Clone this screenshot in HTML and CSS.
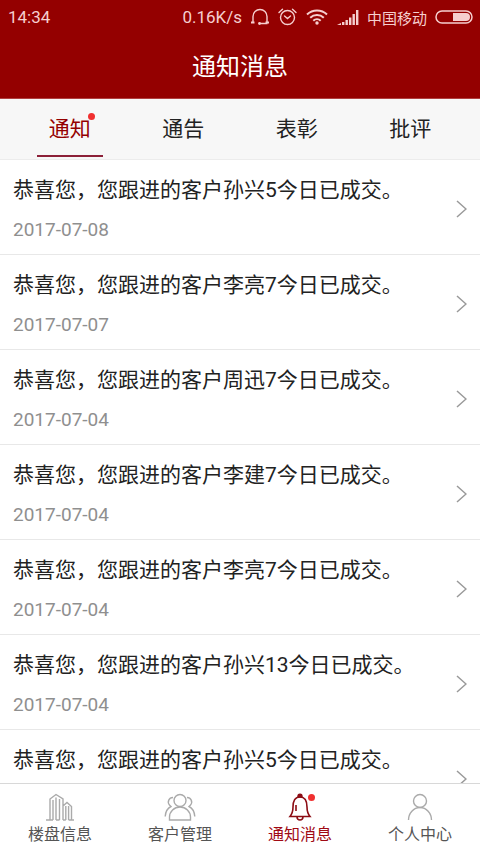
FILE: index.html
```html
<!DOCTYPE html>
<html lang="zh-CN">
<head>
<meta charset="utf-8">
<meta name="viewport" content="width=device-width, initial-scale=1">
<title>通知消息</title>
<link rel="stylesheet" href="styles.css">
</head>
<body>
<header class="header">
  <div class="status">
    <span class="clock">14:34</span>
    <span class="speed">0.16K/s</span>
    <svg class="status-icon" width="20" height="18" viewBox="0 0 20 18" fill="none" stroke="currentColor" stroke-width="1.4"><path d="M3 14V8.500a7 7 0 0 1 14 0V14M17.500 15.500h-8"/><path d="M1 13.500h3.500v2H1zM15.500 13.500H19v2h-3.500z" fill="currentColor" stroke="none"/><circle cx="9.500" cy="15.500" r="1.400" fill="currentColor" stroke="none"/></svg>
    <svg class="status-icon" width="19" height="18" viewBox="0 0 19 18" fill="none" stroke="currentColor" stroke-width="1.400" stroke-linecap="round"><circle cx="9.500" cy="9.500" r="7"/><path d="M6.500 8l3 2.500 3-2.500M1 4.500L4.500 1.200M18 4.500L14.500 1.200"/></svg>
    <svg class="status-icon wifi" width="22" height="16" viewBox="0 0 22 16" fill="none" stroke="currentColor" stroke-width="2"><path d="M1 5.500a14.500 14.500 0 0 1 20 0M4.200 8.800a9.800 9.800 0 0 1 13.600 0M7.300 11.800a5.300 5.300 0 0 1 7.400 0"/><circle cx="11" cy="14" r="1.700" fill="currentColor" stroke="none"/></svg>
    <svg class="status-icon signal" width="22" height="15" viewBox="0 0 22 15" fill="currentColor"><path d="M0 15l4-2v2zM5 12h2.400v3H5zM8.500 10h2.400v5H8.500zM12 7.500h2.400V15H12zM15.500 4h2.400v11h-2.400zM19 0h2.400v15H19z"/></svg>
    <span class="carrier">中国移动</span>
    <svg class="battery" width="38" height="14" viewBox="0 0 38 14"><rect x="1" y="1" width="36" height="12" rx="6" fill="none" stroke="currentColor" stroke-width="1.500"/><path d="M18 3h13a4 4 0 0 1 0 8H18z" fill="currentColor"/></svg>
  </div>
  <h1 class="title">通知消息</h1>
</header>
<nav class="tabs" aria-label="消息分类">
  <a class="tab tab-on" href="#notice"><span class="tab-text">通知<i class="dot"></i></span></a>
  <a class="tab" href="#bulletin"><span class="tab-text">通告</span></a>
  <a class="tab" href="#praise"><span class="tab-text">表彰</span></a>
  <a class="tab" href="#criticism"><span class="tab-text">批评</span></a>
</nav>
<main class="list">
  <a class="row" href="#m1"><div class="msg"><p class="text">恭喜您，您跟进的客户孙兴5今日已成交。</p><time class="date">2017-07-08</time></div><svg class="chevron" width="11" height="18" viewBox="0 0 11 18"><path d="M1 1l9 8-9 8"/></svg></a>
  <a class="row" href="#m2"><div class="msg"><p class="text">恭喜您，您跟进的客户李亮7今日已成交。</p><time class="date">2017-07-07</time></div><svg class="chevron" width="11" height="18" viewBox="0 0 11 18"><path d="M1 1l9 8-9 8"/></svg></a>
  <a class="row" href="#m3"><div class="msg"><p class="text">恭喜您，您跟进的客户周迅7今日已成交。</p><time class="date">2017-07-04</time></div><svg class="chevron" width="11" height="18" viewBox="0 0 11 18"><path d="M1 1l9 8-9 8"/></svg></a>
  <a class="row" href="#m4"><div class="msg"><p class="text">恭喜您，您跟进的客户李建7今日已成交。</p><time class="date">2017-07-04</time></div><svg class="chevron" width="11" height="18" viewBox="0 0 11 18"><path d="M1 1l9 8-9 8"/></svg></a>
  <a class="row" href="#m5"><div class="msg"><p class="text">恭喜您，您跟进的客户李亮7今日已成交。</p><time class="date">2017-07-04</time></div><svg class="chevron" width="11" height="18" viewBox="0 0 11 18"><path d="M1 1l9 8-9 8"/></svg></a>
  <a class="row" href="#m6"><div class="msg"><p class="text">恭喜您，您跟进的客户孙兴13今日已成交。</p><time class="date">2017-07-04</time></div><svg class="chevron" width="11" height="18" viewBox="0 0 11 18"><path d="M1 1l9 8-9 8"/></svg></a>
  <a class="row" href="#m7"><div class="msg"><p class="text">恭喜您，您跟进的客户孙兴5今日已成交。</p></div><svg class="chevron" width="11" height="18" viewBox="0 0 11 18"><path d="M1 1l9 8-9 8"/></svg></a>
</main>
<nav class="bottom" aria-label="主导航">
  <a class="item" href="#estate">
    <svg class="item-icon" width="30" height="28" viewBox="0 0 30 28"><path d="M1 27h4V6l6-4.500L18 6v21M8 27V7M11 27V4.500M14.500 27V6M5 27h3M11 27h3.500M18 13l4-3.500 4.500 4V27H29M20.800 27V13M23.600 27V13M18 27h2.800M23.600 27h3"/></svg>
    <span>楼盘信息</span>
  </a>
  <a class="item" href="#clients">
    <svg class="item-icon" width="32" height="28" viewBox="0 0 32 28"><circle cx="16" cy="7.500" r="6"/><path d="M5.500 27v-3a10.500 10 0 0 1 21 0v3zM9 4.500a4.500 4.500 0 0 0-3.500 7.500l1.500 1.500C3 15.500 1.500 19 1.200 23.500M23 4.500a4.500 4.500 0 0 1 3.500 7.500L25 13.500c4 2 5.500 5.500 5.800 10"/></svg>
    <span>客户管理</span>
  </a>
  <a class="item item-on" href="#messages">
    <span class="icon-wrap"><svg class="item-icon" width="24" height="28" viewBox="0 0 24 28"><path d="M2 23.500c2-2.500 3-5 3-9.500C5 8 7 4 12 4s7 4 7 10c0 4.500 1 7 3 9.500zM9 24c.3 4 5.700 4 6 0"/><path d="M8 12v6"/><path class="solid" d="M10 4c0-3.500 4-3.500 4 0z"/></svg><i class="dot"></i></span>
    <span>通知消息</span>
  </a>
  <a class="item" href="#me">
    <svg class="item-icon" width="26" height="28" viewBox="0 0 26 28"><circle cx="13" cy="8" r="6.500"/><path d="M1.500 27a11.500 12.500 0 0 1 23 0"/></svg>
    <span>个人中心</span>
  </a>
</nav>
</body>
</html>
```
FILE: styles.css
```css
* { box-sizing: border-box; }

body {
  margin: 0;
  height: 100vh;
  display: flex;
  flex-direction: column;
  background: #fff;
  color: #222;
  font-family: Roboto, "Noto Sans CJK SC", sans-serif;
}

a { color: inherit; text-decoration: none; }

.header {
  flex: none;
  background: #940000;
  color: #fff;
  padding-bottom: 13px;
  border-bottom: 1px solid #b04040;
}

.status {
  display: flex;
  align-items: center;
  height: 34px;
  padding: 0 7px 0 8px;
  color: #f6cfcf;
  font-size: 17px;
}

.clock { margin-right: auto; }
.status-icon { margin-left: 8px; }
.wifi { margin-left: 9px; }
.signal { margin-left: 9px; }
.carrier { margin: 0 8px; font-size: 15px; }

.title {
  margin: 0;
  padding-top: 15px;
  font-size: 24px;
  line-height: 36px;
  font-weight: 400;
  text-align: center;
}

.tabs {
  flex: none;
  display: flex;
  padding: 0 13px;
  background: #f7f7f7;
  border-bottom: 1px solid #ececec;
}

.tab {
  flex: 1;
  display: flex;
  justify-content: center;
  font-size: 21px;
  line-height: 60px;
  padding-bottom: 2px;
}

.tab-text {
  position: relative;
  height: 58px;
  padding: 0 12px;
}

.tab-on { color: #940000; }
.tab-on .tab-text { border-bottom: 2px solid #8c2038; }

.dot {
  position: absolute;
  top: 14px;
  right: 8px;
  width: 7px;
  height: 7px;
  border-radius: 50%;
  background: #f03030;
}

.list {
  flex: 1;
  min-height: 0;
  overflow: hidden;
}

.row {
  display: flex;
  align-items: center;
  justify-content: space-between;
  min-height: 95px;
  padding: 15px 13px 12px;
  border-bottom: 1px solid #e8e8e8;
}

.msg { align-self: flex-start; }

.text {
  margin: 0;
  font-size: 21px;
  line-height: 30px;
}

.date {
  display: block;
  margin-top: 13px;
  color: #8f8f8f;
  font-size: 19px;
  line-height: 24px;
}

.chevron {
  fill: none;
  stroke: #999;
  stroke-width: 1.5;
}

.bottom {
  flex: none;
  display: flex;
  height: 70px;
  background: #fff;
  border-top: 1px solid #d8d8d8;
}

.item {
  flex: 1;
  display: flex;
  flex-direction: column;
  align-items: center;
  padding-top: 9px;
  color: #555;
  font-size: 16px;
  line-height: 28px;
}

.item-icon {
  display: block;
  fill: none;
  stroke: #aaa;
  stroke-width: 1.4;
}

.icon-wrap { position: relative; }
.icon-wrap .dot { top: 1px; right: -3px; }

.item-on { color: #a00a14; }
.item-on .item-icon { stroke: #8c0c14; stroke-width: 1.6; }
.item-on .solid { fill: #8c0c14; }
```
